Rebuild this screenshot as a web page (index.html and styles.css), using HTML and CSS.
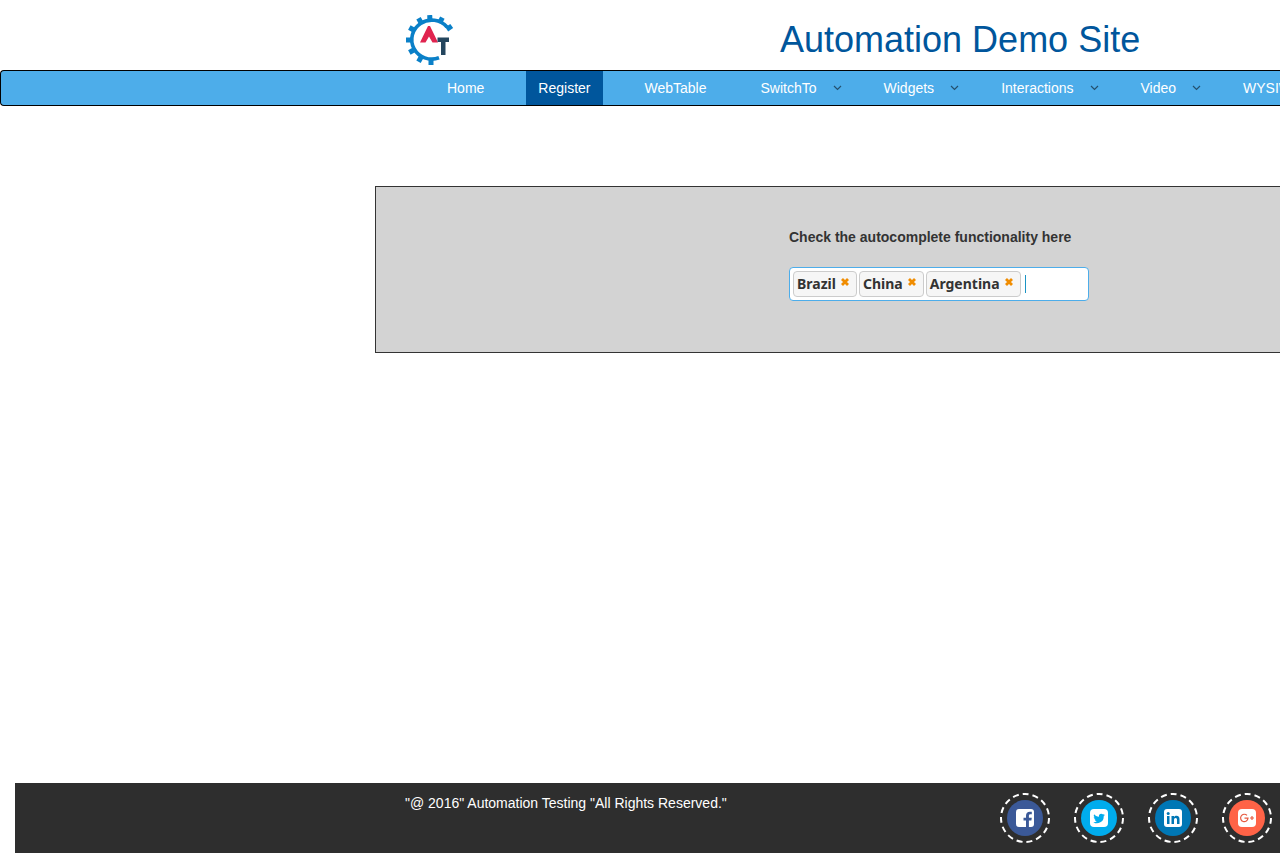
FILE: index.html
```html
<!DOCTYPE html>
<html lang="en">
<head>
<meta charset="utf-8">
<title>Automation Demo Site</title>
<link rel="stylesheet" href="styles.css">
</head>
<body>
<header class="header">
  <svg class="logo" viewBox="0 0 50 50" role="img" aria-label="Automation Testing">
    <path d="M41 12A20 19.500 0 1 0 33 42.800" fill="none" stroke="#0a80c8" stroke-width="3.600"/>
    <g fill="#0a80c8">
      <rect x="22.500" y="0" width="5" height="6" transform="rotate(-3 25 25)"/>
      <rect x="22.500" y="0" width="5" height="6" transform="rotate(27 25 25)"/>
      <rect x="22.500" y="0" width="5" height="6" transform="rotate(56 25 25)"/>
      <rect x="22.500" y="0" width="5" height="6" transform="rotate(-30 25 25)"/>
      <rect x="22.500" y="0" width="5" height="6" transform="rotate(-60 25 25)"/>
      <rect x="22.500" y="0" width="5" height="6" transform="rotate(-90 25 25)"/>
      <rect x="22.500" y="0" width="5" height="6" transform="rotate(-120 25 25)"/>
      <rect x="22.500" y="0" width="5" height="6" transform="rotate(-150 25 25)"/>
      <rect x="22.500" y="0" width="5" height="6" transform="rotate(180 25 25)"/>
    </g>
    <path d="M22 11h2l8 16.500h-5.500L23 21.500l-3.500 6H14z" fill="#e0244f"/>
    <path d="M31.500 22.500H43V27h-3.500v13h-4.500V27h-3.500z" fill="#24465e"/>
  </svg>
  <h1 class="title">Automation Demo Site</h1>
</header>
<nav class="nav">
  <a class="link" href="#">Home</a>
  <a class="link active" href="#">Register</a>
  <a class="link" href="#">WebTable</a>
  <a class="link menu" href="#">SwitchTo<svg class="arrow" viewBox="0 0 9 6"><path d="M1 1l3.500 3.500L8 1"/></svg></a>
  <a class="link menu" href="#">Widgets<svg class="arrow" viewBox="0 0 9 6"><path d="M1 1l3.500 3.500L8 1"/></svg></a>
  <a class="link menu" href="#">Interactions<svg class="arrow" viewBox="0 0 9 6"><path d="M1 1l3.500 3.500L8 1"/></svg></a>
  <a class="link menu" href="#">Video<svg class="arrow" viewBox="0 0 9 6"><path d="M1 1l3.500 3.500L8 1"/></svg></a>
  <a class="link" href="#">WYSIWYG</a>
</nav>
<main class="main">
  <section class="panel">
    <label class="label" for="country">Check the autocomplete functionality here</label>
    <div class="field">
      <span class="tag">Brazil<button class="remove" type="button" aria-label="Remove Brazil"><svg viewBox="0 0 8 8"><path d="M1 1l6 6M7 1L1 7"/></svg></button></span>
      <span class="tag">China<button class="remove" type="button" aria-label="Remove China"><svg viewBox="0 0 8 8"><path d="M1 1l6 6M7 1L1 7"/></svg></button></span>
      <span class="tag">Argentina<button class="remove" type="button" aria-label="Remove Argentina"><svg viewBox="0 0 8 8"><path d="M1 1l6 6M7 1L1 7"/></svg></button></span>
      <input class="entry" id="country" type="text">
    </div>
  </section>
</main>
<footer class="footer">
  <p class="copy">"@ 2016" Automation Testing "All Rights Reserved."</p>
  <div class="social">
    <a href="#" aria-label="Facebook"><svg viewBox="0 0 50 50"><circle class="ring" cx="25" cy="25" r="24"/><circle cx="25" cy="25" r="18" fill="#3b5998"/><rect x="16" y="16" width="18" height="18" rx="3" fill="#fff"/><path d="M26 34v-6.500h-2.500v-2.700H26v-2c0-2.600 1.500-4 3.800-4h2v2.500h-1.300c-1.200 0-1.600.6-1.600 1.600v1.900h2.900l-.4 2.700h-2.500V34z" fill="#3b5998"/></svg></a>
    <a href="#" aria-label="Twitter"><svg viewBox="0 0 50 50"><circle class="ring" cx="25" cy="25" r="24"/><circle cx="25" cy="25" r="18" fill="#00aced"/><rect x="16" y="16" width="18" height="18" rx="4" fill="#fff"/><path transform="translate(19 20) scale(.54)" d="M22 3.500a9 9 0 0 1-2.500.7 4.400 4.400 0 0 0 1.900-2.400 9 9 0 0 1-2.800 1.100A4.400 4.400 0 0 0 11 6.900C7.400 6.700 4.200 5 2 2.300a4.400 4.400 0 0 0 1.400 5.900 4.400 4.400 0 0 1-2-.6c0 2.200 1.500 4 3.500 4.400a4.400 4.400 0 0 1-2 .1 4.400 4.400 0 0 0 4.100 3A9 9 0 0 1 .5 17 12.500 12.500 0 0 0 19.800 5.800 9 9 0 0 0 22 3.500z" fill="#00aced"/></svg></a>
    <a href="#" aria-label="LinkedIn"><svg viewBox="0 0 50 50"><circle class="ring" cx="25" cy="25" r="24"/><circle cx="25" cy="25" r="18" fill="#0077b5"/><rect x="16" y="16" width="18" height="18" rx="3" fill="#fff"/><g fill="#0077b5"><circle cx="20.200" cy="20.400" r="1.500"/><rect x="19" y="23" width="2.500" height="8"/><path d="M23.500 23H26v1.100c.6-.9 1.400-1.300 2.500-1.300 2.200 0 3 1.400 3 3.600V31H29v-4.200c0-1.200-.4-1.900-1.400-1.900-1.100 0-1.600.8-1.600 2V31h-2.500z"/></g></svg></a>
    <a href="#" aria-label="Google Plus"><svg viewBox="0 0 50 50"><circle class="ring" cx="25" cy="25" r="24"/><circle cx="25" cy="25" r="18" fill="#ff6347"/><rect x="16" y="16" width="18" height="18" rx="4" fill="#fff"/><path d="M25 22.400a3.700 3.700 0 1 0 1 2.800h-3.500M28 25h4M30 23v4" fill="none" stroke="#e65a40" stroke-width="1.200"/></svg></a>
  </div>
</footer>
</body>
</html>
```
FILE: styles.css
```css
* {
  box-sizing: border-box;
}

body {
  display: flex;
  flex-direction: column;
  min-height: 100vh;
  margin: 0;
  overflow-x: hidden;
  background: #fff;
  color: #333;
  font: 14px/20px "Liberation Sans", Arial, sans-serif;
}

.header {
  display: grid;
  grid-template-columns: 374px 1fr;
  align-items: center;
  height: 70px;
  padding: 10px 0 0 406px;
}

.logo {
  width: 50px;
  height: 50px;
}

.title {
  margin: 0;
  color: #00569c;
  font-size: 36px;
  line-height: 40px;
  font-weight: 400;
  white-space: nowrap;
}

.nav {
  display: flex;
  gap: 30px;
  padding-left: 434px;
  overflow: hidden;
  border: 1px solid #000;
  border-right: 0;
  border-radius: 4px 0 0 4px;
  background: #4dadea;
}

.link {
  display: flex;
  flex: none;
  align-items: center;
  padding: 7px 12px;
  color: #fff;
  text-decoration: none;
}

.active {
  background: #00569c;
}

.menu {
  padding-right: 0;
}

.arrow {
  width: 9px;
  height: 6px;
  margin-left: 16px;
  fill: none;
  stroke: #24506e;
  stroke-width: 1.2;
}

.main {
  flex: 1;
  padding: 80px 0 40px 375px;
}

.panel {
  padding: 40px 0 51px 413px;
  border: 1px solid #333;
  border-right: 0;
  background: #d3d3d3;
}

.label {
  display: block;
  margin-bottom: 20px;
  font-weight: 700;
}

.field {
  display: flex;
  align-items: center;
  gap: 2px;
  width: 300px;
  height: 34px;
  padding: 3px;
  border: 1px solid #4dadea;
  border-radius: 4px;
  background: #fff;
}

.tag {
  display: flex;
  flex: none;
  height: 26px;
  padding: 2px 7px 2px 3px;
  border: 1px solid #ccc;
  border-radius: 4px;
  background: #f6f6f6;
  font: 700 14px/20px "Trebuchet MS", "Noto Sans", sans-serif;
}

.remove {
  width: 8px;
  height: 8px;
  margin: 4px 0 0 5px;
  padding: 0;
  border: 0;
  background: none;
}

.remove svg {
  display: block;
  stroke: #f08c00;
  stroke-width: 2.8;
}

.entry {
  flex: 1;
  min-width: 0;
  height: 18px;
  margin-left: 2px;
  padding: 0;
  border: 0;
  border-left: 1px solid #1c94c4;
  border-radius: 0;
  outline: 0;
}

.footer {
  display: flex;
  justify-content: space-between;
  margin-left: 15px;
  padding: 10px 8px 10px 390px;
  background: #2e2e2e;
  color: #fff;
}

.copy {
  margin: 0;
}

.social {
  display: flex;
  gap: 24px;
}

.social a,
.social svg {
  display: block;
  width: 50px;
  height: 50px;
}

.ring {
  fill: none;
  stroke: #fff;
  stroke-width: 2;
  stroke-dasharray: 6 4;
}
```
